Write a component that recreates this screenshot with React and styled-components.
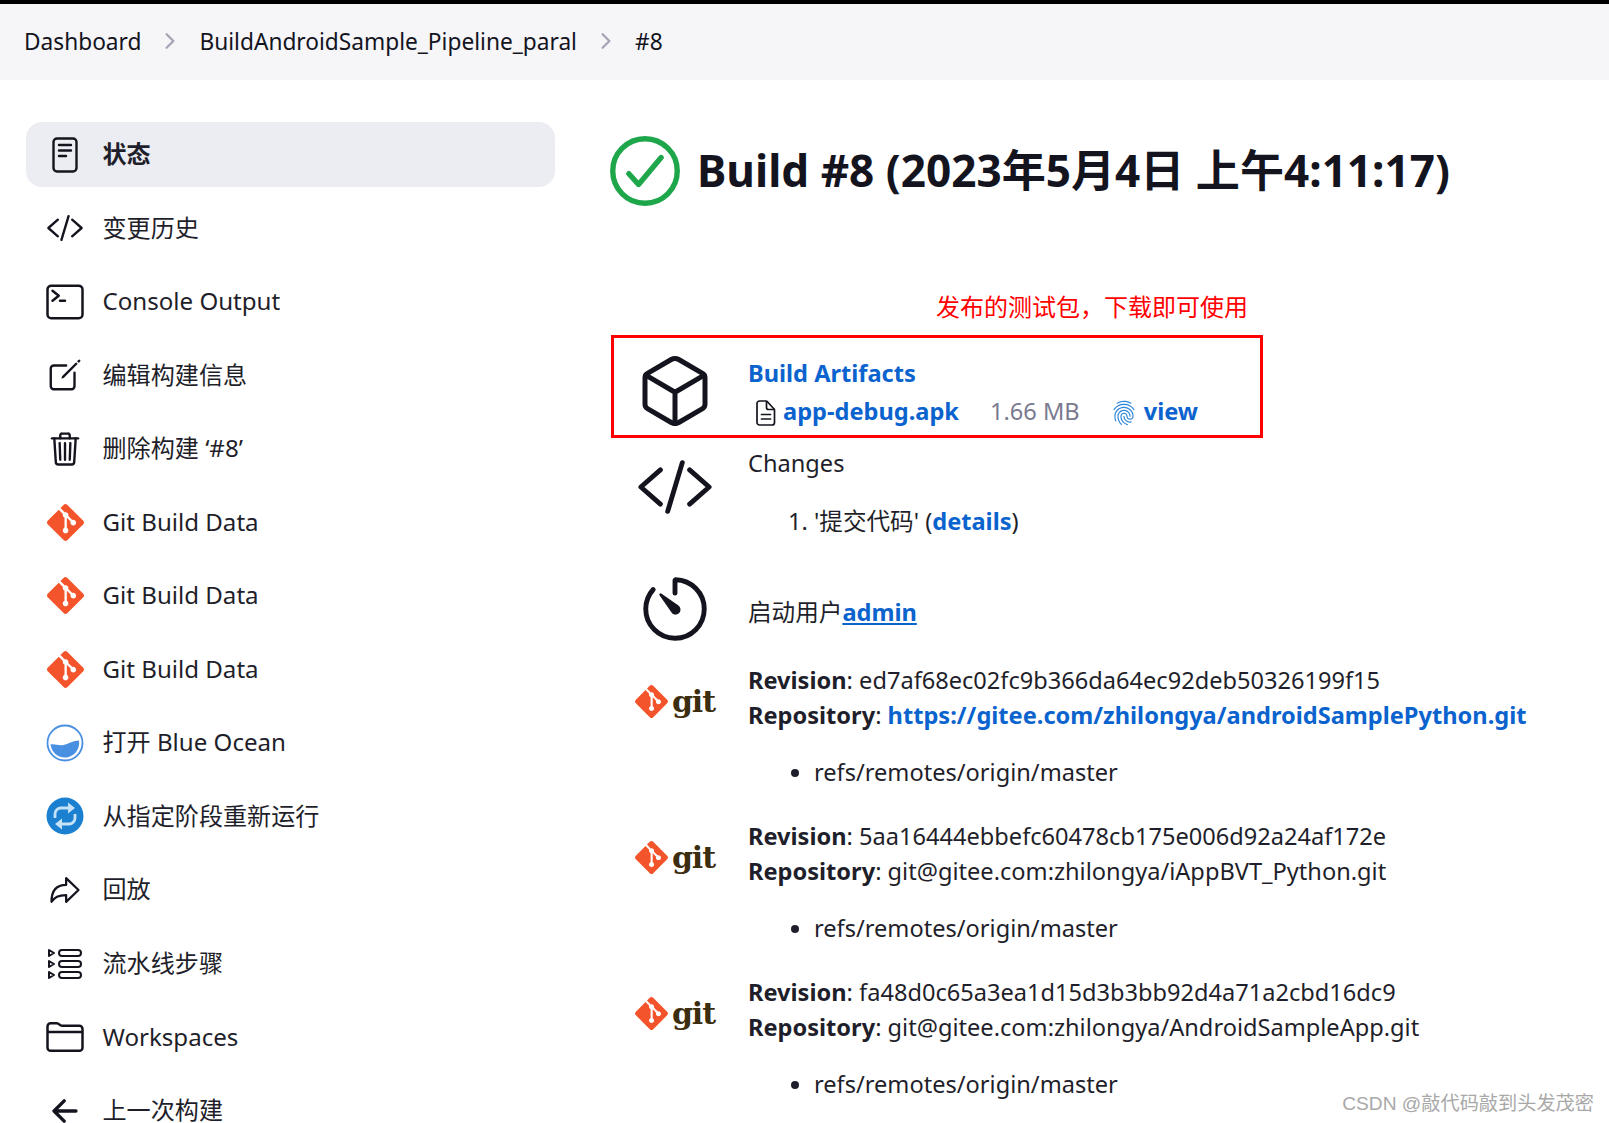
import React from "react";
import styled, { createGlobalStyle } from "styled-components";
import {
  IoCodeSlashOutline,
  IoTerminalOutline,
  IoCreateOutline,
  IoTrashOutline,
  IoCubeOutline,
  IoTimerOutline,
  IoArrowBackOutline,
  IoFolderOutline,
  IoArrowRedoOutline,
  IoCheckmarkCircleOutline,
  IoFingerPrintOutline,
  IoChevronForward,
} from "react-icons/io5";
import { SiGit } from "react-icons/si";

const FONT = `"Noto Sans", "Noto Sans CJK SC", sans-serif`;
const CJK = `"Noto Sans CJK SC", "Noto Sans", sans-serif`;

const GlobalStyle = createGlobalStyle`
  html, body {
    margin: 0;
    padding: 0;
    height: 1123px;
    overflow: hidden;
    background: #fff;
  }
  body {
    font-family: ${FONT};
    font-size: 24px;
    color: #1f1f2b;
  }
  * { box-sizing: border-box; }
`;

const Page = styled.div`
  position: relative;
  height: 1123px;
  overflow: hidden;
  border-top: 4px solid #000;
`;

const Breadcrumbs = styled.nav`
  display: flex;
  align-items: center;
  height: 76px;
  padding: 0 0 2px 24px;
  background: #f6f6f8;
  font-size: 22.7px;
  color: #14141f;
`;

const Crumb = styled.span`
  white-space: nowrap;
`;

const Separator = styled.span`
  display: flex;
  justify-content: center;
  width: 58px;
  color: #a3a3b3;
  font-size: 24px;
`;

const Layout = styled.div`
  display: grid;
  grid-template-columns: 529px 1fr;
  column-gap: 56px;
  padding-left: 26px;
`;

const Sidebar = styled.aside`
  display: flex;
  flex-direction: column;
  gap: 8.55px;
  padding-top: 42px;
`;

const NavItem = styled.a`
  display: flex;
  align-items: center;
  flex: none;
  height: 65px;
  border-radius: 16px;
  background: ${({ $active }) => ($active ? "#ecedf2" : "transparent")};
  font-weight: ${({ $active }) => ($active ? 700 : 400)};
  color: #1f1f2b;
`;

const NavIcon = styled.span`
  display: flex;
  align-items: center;
  justify-content: center;
  flex: none;
  width: 40px;
  height: 40px;
  margin: 0 17.500px 0 19px;
  color: #14141f;
`;

const NavLabel = styled.span`
  margin-top: -1px;
  font-size: 24.1px;
  line-height: 1;
  white-space: nowrap;
`;

const Main = styled.main`
  min-width: 0;
`;

const TitleRow = styled.div`
  display: flex;
  align-items: center;
  height: 78px;
  margin-top: 52px;
`;

const TitleIcon = styled.span`
  display: flex;
  align-items: center;
  justify-content: center;
  width: 86px;
  height: 86px;
  margin: 0 9px 0 -9px;
  color: #1ea64b;
`;

const Title = styled.h1`
  margin: 0;
  padding-bottom: 6px;
  font-size: 44.1px;
  font-weight: 700;
  color: #14141f;
  white-space: nowrap;
`;

const Note = styled.div`
  margin: 80px 0 0 325px;
  height: 32px;
  line-height: 32px;
  font-family: ${CJK};
  font-size: 24px;
  color: #f00;
  white-space: nowrap;
`;

const Section = styled.section`
  display: grid;
  grid-template-columns: 128px 1fr;
  column-gap: 9px;
  line-height: 35px;
  margin-top: ${({ $top }) => $top || 0}px;
`;

const BigIcon = styled.div`
  display: flex;
  justify-content: center;
  align-items: ${({ $align }) => $align || "flex-start"};
  color: #14141f;
  margin-top: ${({ $top }) => $top || 0}px;
`;

const ArtifactBox = styled(Section)`
  width: 652px;
  height: 103px;
  margin-top: 13px;
  outline: 3px solid #f00;
  outline-offset: -3px;
  align-items: center;
`;

const Body = styled.div`
  font-size: 23.6px;
  min-width: 0;
`;

const ArtifactBody = styled(Body)`
  padding-top: 11px;
`;

const StarterBody = styled(Body)`
  align-self: center;
  padding-top: 7px;
`;

const Link = styled.a`
  color: #0b63ce;
  font-weight: 700;
  text-decoration: ${({ $underline }) => ($underline ? "underline" : "none")};
`;

const ArtifactHead = styled.div`
  height: 38px;
  line-height: 38px;
`;

const ArtifactRow = styled.div`
  display: flex;
  align-items: center;
  height: 38px;
  padding-left: 8px;
`;

const FileIcon = styled.span`
  display: flex;
  margin-right: 7px;
  padding-top: 3px;
`;

const Size = styled.span`
  margin: 0 31px;
  color: #7a7a90;
`;

const Fingerprint = styled.span`
  display: flex;
  margin-right: 7px;
  padding-top: 3px;
  color: #2f86d9;
`;

const Steps = styled.ol`
  margin: 23px 0 0;
  padding-left: 66px;
`;

const Bullets = styled.ul`
  margin: 22.5px 0 0;
  padding-left: 66px;
`;

const GitLogo = styled.div`
  display: flex;
  align-items: center;
  justify-content: center;
  gap: 4px;
  height: 70px;
  margin-top: 4px;
  font-family: "DejaVu Serif", serif;
  font-size: 30px;
  font-weight: 700;
  letter-spacing: -1px;
  color: #3b2d0e;
`;

const Watermark = styled.div`
  position: absolute;
  right: 15px;
  bottom: 6px;
  font-family: "Liberation Sans", ${CJK};
  font-size: 19.2px;
  line-height: 26px;
  color: #a8a8a8;
`;

const GitIcon = () => <SiGit size={37} color="#f4542b" />;

const StatusIcon = () => (
  <svg width="26" height="36" viewBox="0 0 26 36" fill="none" stroke="#14141f" strokeWidth="2.400" strokeLinecap="round">
    <rect x="1.500" y="1.500" width="23" height="33" rx="3.500" />
    <path d="M7 8h12M7 13.500h12M7 19h7" />
  </svg>
);

const ApkFileIcon = () => (
  <svg width="20" height="26" viewBox="0 0 20 26" fill="none" stroke="#14141f" strokeWidth="1.700" strokeLinejoin="round">
    <path d="M3.500 1h6.500c.6 0 1 .3 1.400.7l6.400 7c.4.4.7.9.7 1.500V22.500a2.500 2.500 0 0 1-2.500 2.500h-12.500A2.500 2.500 0 0 1 1 22.500v-19A2.500 2.500 0 0 1 3.500 1z" />
    <path d="M10.500 1.500v6a2 2 0 0 0 2 2h5.500" />
    <path d="M5.500 14.500h9M5.500 19h9" strokeLinecap="round" />
  </svg>
);

const OceanIcon = () => (
  <svg width="38" height="38" viewBox="0 0 38 38">
    <circle cx="19" cy="19" r="17.500" fill="none" stroke="#4a90e2" strokeWidth="1.800" />
    <path d="M4.500 20.500c4.500-1 8 1.500 13 .5 5-1 8-4 15.500-4.500 1.500 9-5.500 17-14 17-8 0-13.500-6-14.500-13z" fill="#4a90e2" />
  </svg>
);

const RestartIcon = () => (
  <svg width="38" height="38" viewBox="0 0 38 38">
    <circle cx="19" cy="19" r="18.500" fill="#1b80d0" />
    <path d="M9 21v-4a6 6 0 0 1 6-6h9" fill="none" stroke="#c5e2f6" strokeWidth="2.800" />
    <path d="M29 17v4a6 6 0 0 1-6 6h-9" fill="none" stroke="#c5e2f6" strokeWidth="2.800" />
    <path d="M22 5.500l7 5.500-7 5.500zM16 21.500l-7 5.500 7 5.500z" fill="#c5e2f6" />
  </svg>
);

const StepsIcon = () => (
  <svg width="36" height="32" viewBox="0 0 36 32" fill="none" stroke="#14141f" strokeWidth="2">
    <path d="M2 2l5 3-5 3zM2 13l5 3-5 3zM2 24l5 3-5 3z" strokeLinejoin="round" />
    <rect x="12" y="2" width="22" height="6" rx="3" />
    <rect x="12" y="13" width="22" height="6" rx="3" />
    <rect x="12" y="24" width="22" height="6" rx="3" />
  </svg>
);

const NAV = [
  { label: "变更历史", icon: <IoCodeSlashOutline size={38} /> },
  { label: "Console Output", icon: <IoTerminalOutline size={40} /> },
  { label: "编辑构建信息", icon: <IoCreateOutline size={38} /> },
  { label: "删除构建 ‘#8’", icon: <IoTrashOutline size={38} /> },
  { label: "Git Build Data", icon: <GitIcon /> },
  { label: "Git Build Data", icon: <GitIcon /> },
  { label: "Git Build Data", icon: <GitIcon /> },
  { label: "打开 Blue Ocean", icon: <OceanIcon /> },
  { label: "从指定阶段重新运行", icon: <RestartIcon /> },
  { label: "回放", icon: <IoArrowRedoOutline size={36} /> },
  { label: "流水线步骤", icon: <StepsIcon /> },
  { label: "Workspaces", icon: <IoFolderOutline size={40} /> },
  { label: "上一次构建", icon: <IoArrowBackOutline size={36} /> },
];

const REVISIONS = [
  {
    sha: "ed7af68ec02fc9b366da64ec92deb50326199f15",
    repo: "https://gitee.com/zhilongya/androidSamplePython.git",
    link: true,
  },
  { sha: "5aa16444ebbefc60478cb175e006d92a24af172e", repo: "git@gitee.com:zhilongya/iAppBVT_Python.git" },
  { sha: "fa48d0c65a3ea1d15d3b3bb92d4a71a2cbd16dc9", repo: "git@gitee.com:zhilongya/AndroidSampleApp.git" },
];

export default function App() {
  return (
    <Page>
      <GlobalStyle />
      <Breadcrumbs>
        <Crumb>Dashboard</Crumb>
        <Separator><IoChevronForward /></Separator>
        <Crumb>BuildAndroidSample_Pipeline_paral</Crumb>
        <Separator><IoChevronForward /></Separator>
        <Crumb>#8</Crumb>
      </Breadcrumbs>
      <Layout>
        <Sidebar>
          <NavItem $active>
            <NavIcon><StatusIcon /></NavIcon>
            <NavLabel>状态</NavLabel>
          </NavItem>
          {NAV.map((item, i) => (
            <NavItem key={i}>
              <NavIcon>{item.icon}</NavIcon>
              <NavLabel>{item.label}</NavLabel>
            </NavItem>
          ))}
        </Sidebar>
        <Main>
          <TitleRow>
            <TitleIcon><IoCheckmarkCircleOutline size={86} /></TitleIcon>
            <Title>Build #8 (2023年5月4日 上午4:11:17)</Title>
          </TitleRow>
          <Note>发布的测试包，下载即可使用</Note>
          <ArtifactBox>
            <BigIcon $align="center" $top={8}><IoCubeOutline size={80} /></BigIcon>
            <ArtifactBody>
              <ArtifactHead><Link>Build Artifacts</Link></ArtifactHead>
              <ArtifactRow>
                <FileIcon><ApkFileIcon /></FileIcon>
                <Link>app-debug.apk</Link>
                <Size>1.66 MB</Size>
                <Fingerprint><IoFingerPrintOutline size={26} /></Fingerprint>
                <Link>view</Link>
              </ArtifactRow>
            </ArtifactBody>
          </ArtifactBox>
          <Section $top={7.5}>
            <BigIcon $top={2}><IoCodeSlashOutline size={78} /></BigIcon>
            <Body>
              Changes
              <Steps>
                <li>'提交代码' (<Link>details</Link>)</li>
              </Steps>
            </Body>
          </Section>
          <Section $top={31}>
            <BigIcon $align="center"><IoTimerOutline size={78} /></BigIcon>
            <StarterBody>
              启动用户<Link $underline>admin</Link>
            </StarterBody>
          </Section>
          {REVISIONS.map((rev, i) => (
            <Section key={rev.sha} $top={i === 0 ? 15 : 28.5}>
              <GitLogo><SiGit size={33} color="#f4542b" />git</GitLogo>
              <Body>
                <div><b>Revision</b>: {rev.sha}</div>
                <div>
                  <b>Repository</b>: {rev.link ? <Link>{rev.repo}</Link> : rev.repo}
                </div>
                <Bullets><li>refs/remotes/origin/master</li></Bullets>
              </Body>
            </Section>
          ))}
        </Main>
      </Layout>
      <Watermark>CSDN @敲代码敲到头发茂密</Watermark>
    </Page>
  );
}
